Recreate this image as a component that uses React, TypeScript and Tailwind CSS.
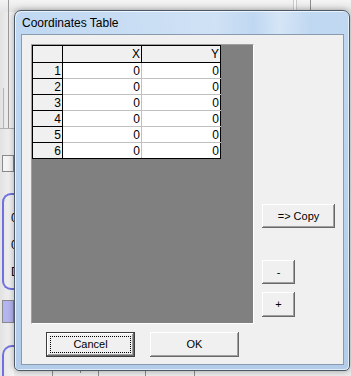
import React from "react";

const rows = [1, 2, 3, 4, 5, 6];

const font = "font-['Liberation_Sans',Arial,sans-serif]";

const bevel =
  "bg-[#f0f0f0] text-[11px] text-black shadow-[inset_-1px_-1px_#696969,inset_1px_1px_#fff,inset_-2px_-2px_#a0a0a0]";

function Btn({
  children,
  className = "",
  focused = false,
}: {
  children: React.ReactNode;
  className?: string;
  focused?: boolean;
}) {
  if (focused) {
    return (
      <button className={`border border-[#3c3c3c] p-0 ${bevel} ${className}`}>
        <div className="m-[3px] flex h-[calc(100%-6px)] items-center justify-center border border-dotted border-black">
          {children}
        </div>
      </button>
    );
  }
  return <button className={`flex items-center justify-center ${bevel} ${className}`}>{children}</button>;
}

// the window that sits behind the dialog
function Backdrop() {
  return (
    <div className="flex h-full flex-col">
      <div className="flex h-[12px] shrink-0 bg-gradient-to-b from-[#f4f4f4] to-[#e4e4e4]">
        <div className="w-[9px] border-r border-[#9a9a9a]" />
        <div className="w-[284px]" />
        <div className="w-[4px] border-x border-[#c8c8c8] bg-[#f8f8f8]" />
        <div className="w-[13px]" />
        <div className="w-px bg-[#8c8c8c]" />
      </div>
      <div className="flex flex-1">
        <div className="flex w-[14px] flex-col bg-gradient-to-r from-[#e2e2e2] to-[#f6f6f6]">
          <div className="flex h-[116px]">
            <div className="mt-[76px] w-[4px] border-r border-[#b4b4b4]" />
            <div className="w-[5px] border-r border-[#9a9a9a]" />
          </div>
          <div className="h-px bg-[#b0b0b0]" />
          <div className="ml-[2px] mt-[26px] h-[17px] border border-[#8a8a8a] bg-[#f4f4f4]" />
          <div
            className={`ml-[2px] mt-[21px] flex h-[97px] flex-col gap-[15px] rounded-l-[9px] border-y-2 border-l-2 border-[#7070e0] pl-[7px] pt-[17px] text-[12px] leading-[12px] ${font}`}
          >
            <span>0</span>
            <span>0</span>
            <span>D</span>
          </div>
          <div className="ml-[2px] mt-[10px] h-[23px] border border-[#8a8a8a] bg-[#b4b4ee]" />
          <div className="ml-[2px] mt-[22px] flex-1 rounded-tl-[10px] border-l-2 border-t-2 border-[#7070e0]" />
        </div>
        <div className="flex flex-1 flex-col justify-end">
          <div className="flex h-[6px]">
            <div className="ml-[38px] w-px bg-[#8c8c8c]" />
            <div className="ml-[27px] h-[3px] w-px bg-[#8c8c8c]" />
            <div className="ml-[17px] w-px bg-[#8c8c8c]" />
            <div className="ml-[46px] w-px bg-[#8c8c8c]" />
            <div className="ml-[48px] w-px bg-[#8c8c8c]" />
          </div>
        </div>
      </div>
    </div>
  );
}

function Grid() {
  return (
    <div className="h-[280px] w-[223px] border border-b-white border-l-[#a0a0a0] border-r-white border-t-[#a0a0a0] bg-[#808080]">
      <div className="w-[189px] border-l border-t border-black text-[12px] leading-none">
        <div className="flex h-[17px] border-b border-black bg-[#f0f0f0]">
          <div className="w-[30px] border-r border-black" />
          <div className="flex w-[79px] items-center justify-end border-r border-black pr-[1px]">X</div>
          <div className="flex w-[79px] items-center justify-end border-r border-black pr-[1px]">Y</div>
        </div>
        {rows.map((r, i) => (
          <div
            key={r}
            className={`flex h-[16px] border-b ${i === rows.length - 1 ? "border-black" : "border-[#c0c0c0]"}`}
          >
            <div
              className={`flex w-[30px] items-center justify-end border-r border-black bg-[#f0f0f0] pr-[1px] ${i === rows.length - 1 ? "" : "shadow-[0_1px_0_#000]"}`}
            >
              {r}
            </div>
            <div className="flex w-[79px] items-center justify-end border-r border-[#c0c0c0] bg-white pr-[1px]">0</div>
            <div className="flex w-[79px] items-center justify-end border-r border-black bg-white pr-[1px]">0</div>
          </div>
        ))}
      </div>
    </div>
  );
}

export default function App() {
  return (
    <div className={`relative h-[376px] w-[351px] overflow-hidden bg-[#ececec] text-black ${font}`}>
      <Backdrop />

      {/* dialog window, lying over the window behind */}
      <div className="absolute left-[14px] top-[10px] flex h-[361px] w-[336px] flex-col rounded-b-[5px] rounded-t-[7px] border border-[#4a5868] bg-gradient-to-b from-[#c0d8f2] via-[#bad3ee] to-[#b2cce9] pb-[5px] pl-[6px] pr-[5px] shadow-[inset_1px_1px_0_rgba(255,255,255,0.7),inset_-1px_-1px_0_rgba(255,255,255,0.6),0_0_6px_rgba(0,0,0,0.35)]">
        <div className="flex h-[23px] shrink-0 items-center bg-[linear-gradient(90deg,rgba(255,255,255,0)_0%,rgba(255,255,255,0.25)_60%,rgba(255,255,255,0)_72%,rgba(255,255,255,0.35)_80%,rgba(255,255,255,0)_90%)] pl-[1px] text-[12px]">
          Coordinates Table
        </div>

        <div className="flex flex-1 flex-col border border-[#8a9bb0] bg-[#f0f0f0] pl-[9px] pt-[9px]">
          <div className="flex">
            <Grid />
            <div className="ml-[8px] flex flex-col">
              <Btn className="mt-[160px] h-[24px] w-[73px]">=&gt; Copy</Btn>
              <Btn className="mt-[32px] h-[24px] w-[33px]">-</Btn>
              <Btn className="mt-[8px] h-[25px] w-[33px]">+</Btn>
            </div>
          </div>
          <div className="ml-[15px] mt-[8px] flex gap-[15px]">
            <Btn focused className="h-[25px] w-[89px]">
              Cancel
            </Btn>
            <Btn className="h-[25px] w-[89px]">OK</Btn>
          </div>
        </div>
      </div>
    </div>
  );
}
